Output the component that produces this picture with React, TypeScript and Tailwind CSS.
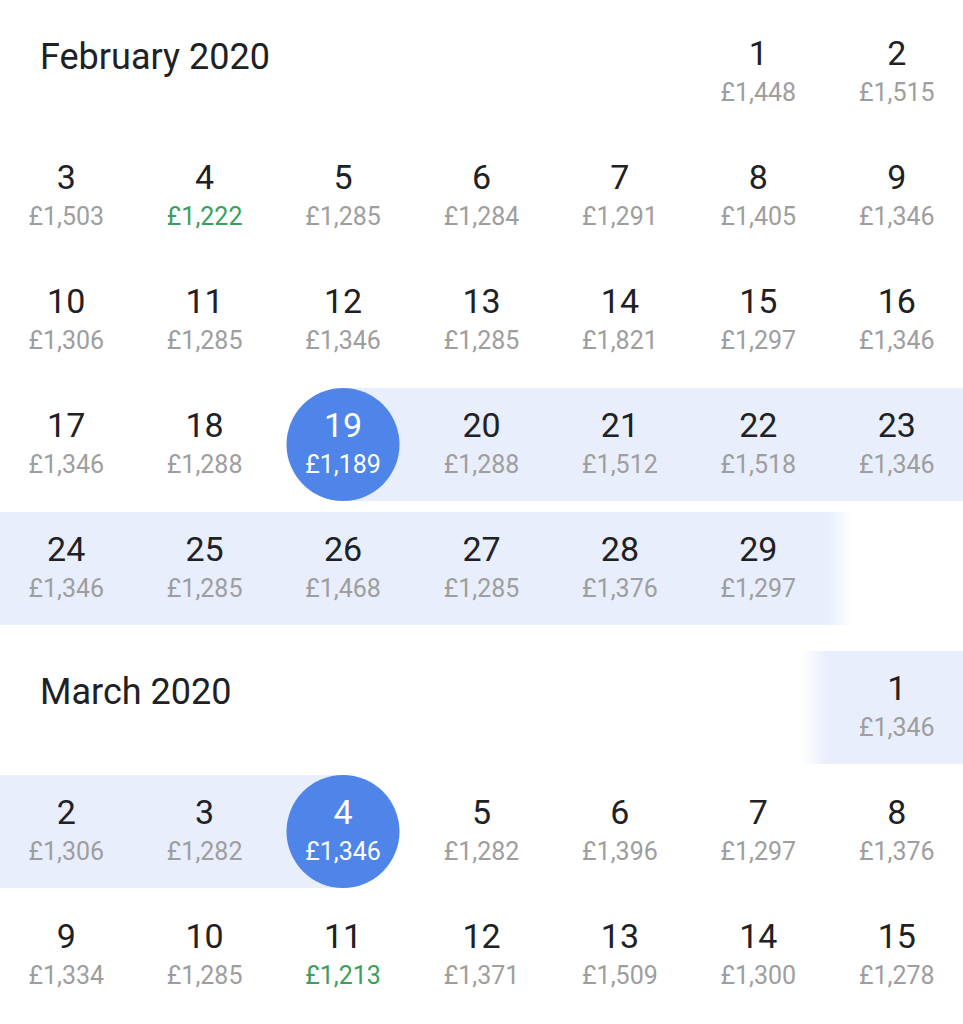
import React from 'react'

type Day = {
  day?: number
  price?: string
  cheap?: boolean
  // range styling
  band?: 'full' | 'left' | 'right' | 'fadeOut' | 'fadeIn'
  selected?: boolean
}

const font = { fontFamily: 'Roboto, "Liberation Sans", sans-serif' }

const feb: Day[][] = [
  [
    { day: 1, price: '£1,448' },
    { day: 2, price: '£1,515' },
  ],
  [
    { day: 3, price: '£1,503' },
    { day: 4, price: '£1,222', cheap: true },
    { day: 5, price: '£1,285' },
    { day: 6, price: '£1,284' },
    { day: 7, price: '£1,291' },
    { day: 8, price: '£1,405' },
    { day: 9, price: '£1,346' },
  ],
  [
    { day: 10, price: '£1,306' },
    { day: 11, price: '£1,285' },
    { day: 12, price: '£1,346' },
    { day: 13, price: '£1,285' },
    { day: 14, price: '£1,821' },
    { day: 15, price: '£1,297' },
    { day: 16, price: '£1,346' },
  ],
  [
    { day: 17, price: '£1,346' },
    { day: 18, price: '£1,288' },
    { day: 19, price: '£1,189', selected: true, band: 'right' },
    { day: 20, price: '£1,288', band: 'full' },
    { day: 21, price: '£1,512', band: 'full' },
    { day: 22, price: '£1,518', band: 'full' },
    { day: 23, price: '£1,346', band: 'full' },
  ],
  [
    { day: 24, price: '£1,346', band: 'full' },
    { day: 25, price: '£1,285', band: 'full' },
    { day: 26, price: '£1,468', band: 'full' },
    { day: 27, price: '£1,285', band: 'full' },
    { day: 28, price: '£1,376', band: 'full' },
    { day: 29, price: '£1,297', band: 'full' },
    { band: 'fadeOut' },
  ],
]

const march: Day[][] = [
  [{ band: 'fadeIn' }, { day: 1, price: '£1,346', band: 'full' }],
  [
    { day: 2, price: '£1,306', band: 'full' },
    { day: 3, price: '£1,282', band: 'full' },
    { day: 4, price: '£1,346', selected: true, band: 'left' },
    { day: 5, price: '£1,282' },
    { day: 6, price: '£1,396' },
    { day: 7, price: '£1,297' },
    { day: 8, price: '£1,376' },
  ],
  [
    { day: 9, price: '£1,334' },
    { day: 10, price: '£1,285' },
    { day: 11, price: '£1,213', cheap: true },
    { day: 12, price: '£1,371' },
    { day: 13, price: '£1,509' },
    { day: 14, price: '£1,300' },
    { day: 15, price: '£1,278' },
  ],
]

function Cell({ d }: { d: Day }) {
  return (
    <div className="relative h-[113px]">
      {d.band === 'full' && <div className="absolute inset-0 bg-[#e8eefc]" />}
      {d.band === 'right' && <div className="absolute inset-y-0 left-1/2 right-0 bg-[#e8eefc]" />}
      {d.band === 'left' && <div className="absolute inset-y-0 left-0 right-1/2 bg-[#e8eefc]" />}
      {d.band === 'fadeOut' && (
        <div className="absolute inset-y-0 left-0 w-[24px] bg-gradient-to-r from-[#e8eefc] to-white" />
      )}
      {d.band === 'fadeIn' && (
        <div className="absolute inset-y-0 right-0 w-[27px] bg-gradient-to-r from-white to-[#e8eefc]" />
      )}
      {d.selected && (
        <div className="absolute left-1/2 top-0 h-[113px] w-[113px] -translate-x-1/2 rounded-full bg-[#4f84e8]" />
      )}
      {d.day !== undefined && (
        <div className="relative flex flex-col items-center pt-[17px]">
          <span
            className={`text-[34px] leading-[40px] ${d.selected ? 'text-white' : 'text-[#202124]'}`}
          >
            {d.day}
          </span>
          <span
            className={`mt-[5px] text-[25px] leading-[30px] ${
              d.selected ? 'text-white' : d.cheap ? 'text-[#3a9f5c]' : 'text-[#9e9e9e]'
            }`}
          >
            {d.price}
          </span>
        </div>
      )}
    </div>
  )
}

function Month({ title, rows, lead }: { title: string; rows: Day[][]; lead: number }) {
  return (
    <div className="flex flex-col gap-[11px]">
      {rows.map((row, i) => (
        <div key={i} className="grid grid-cols-7">
          {i === 0 && (
            <div
              className="flex h-[113px] items-start pl-[43px] pt-[20px] text-[36px] leading-[42px] text-[#202124]"
              style={{ gridColumn: `span ${lead} / span ${lead}` }}
            >
              {title}
            </div>
          )}
          {row.map((d, j) => (
            <Cell key={j} d={d} />
          ))}
        </div>
      ))}
    </div>
  )
}

export default function App() {
  return (
    <div className="h-[1024px] w-[963px] overflow-hidden bg-white" style={font}>
      <div className="ml-[-3px] flex w-[969px] flex-col gap-[26px] pt-[16px]">
        <Month title="February 2020" rows={feb} lead={5} />
        <Month title="March 2020" rows={march} lead={5} />
      </div>
    </div>
  )
}
